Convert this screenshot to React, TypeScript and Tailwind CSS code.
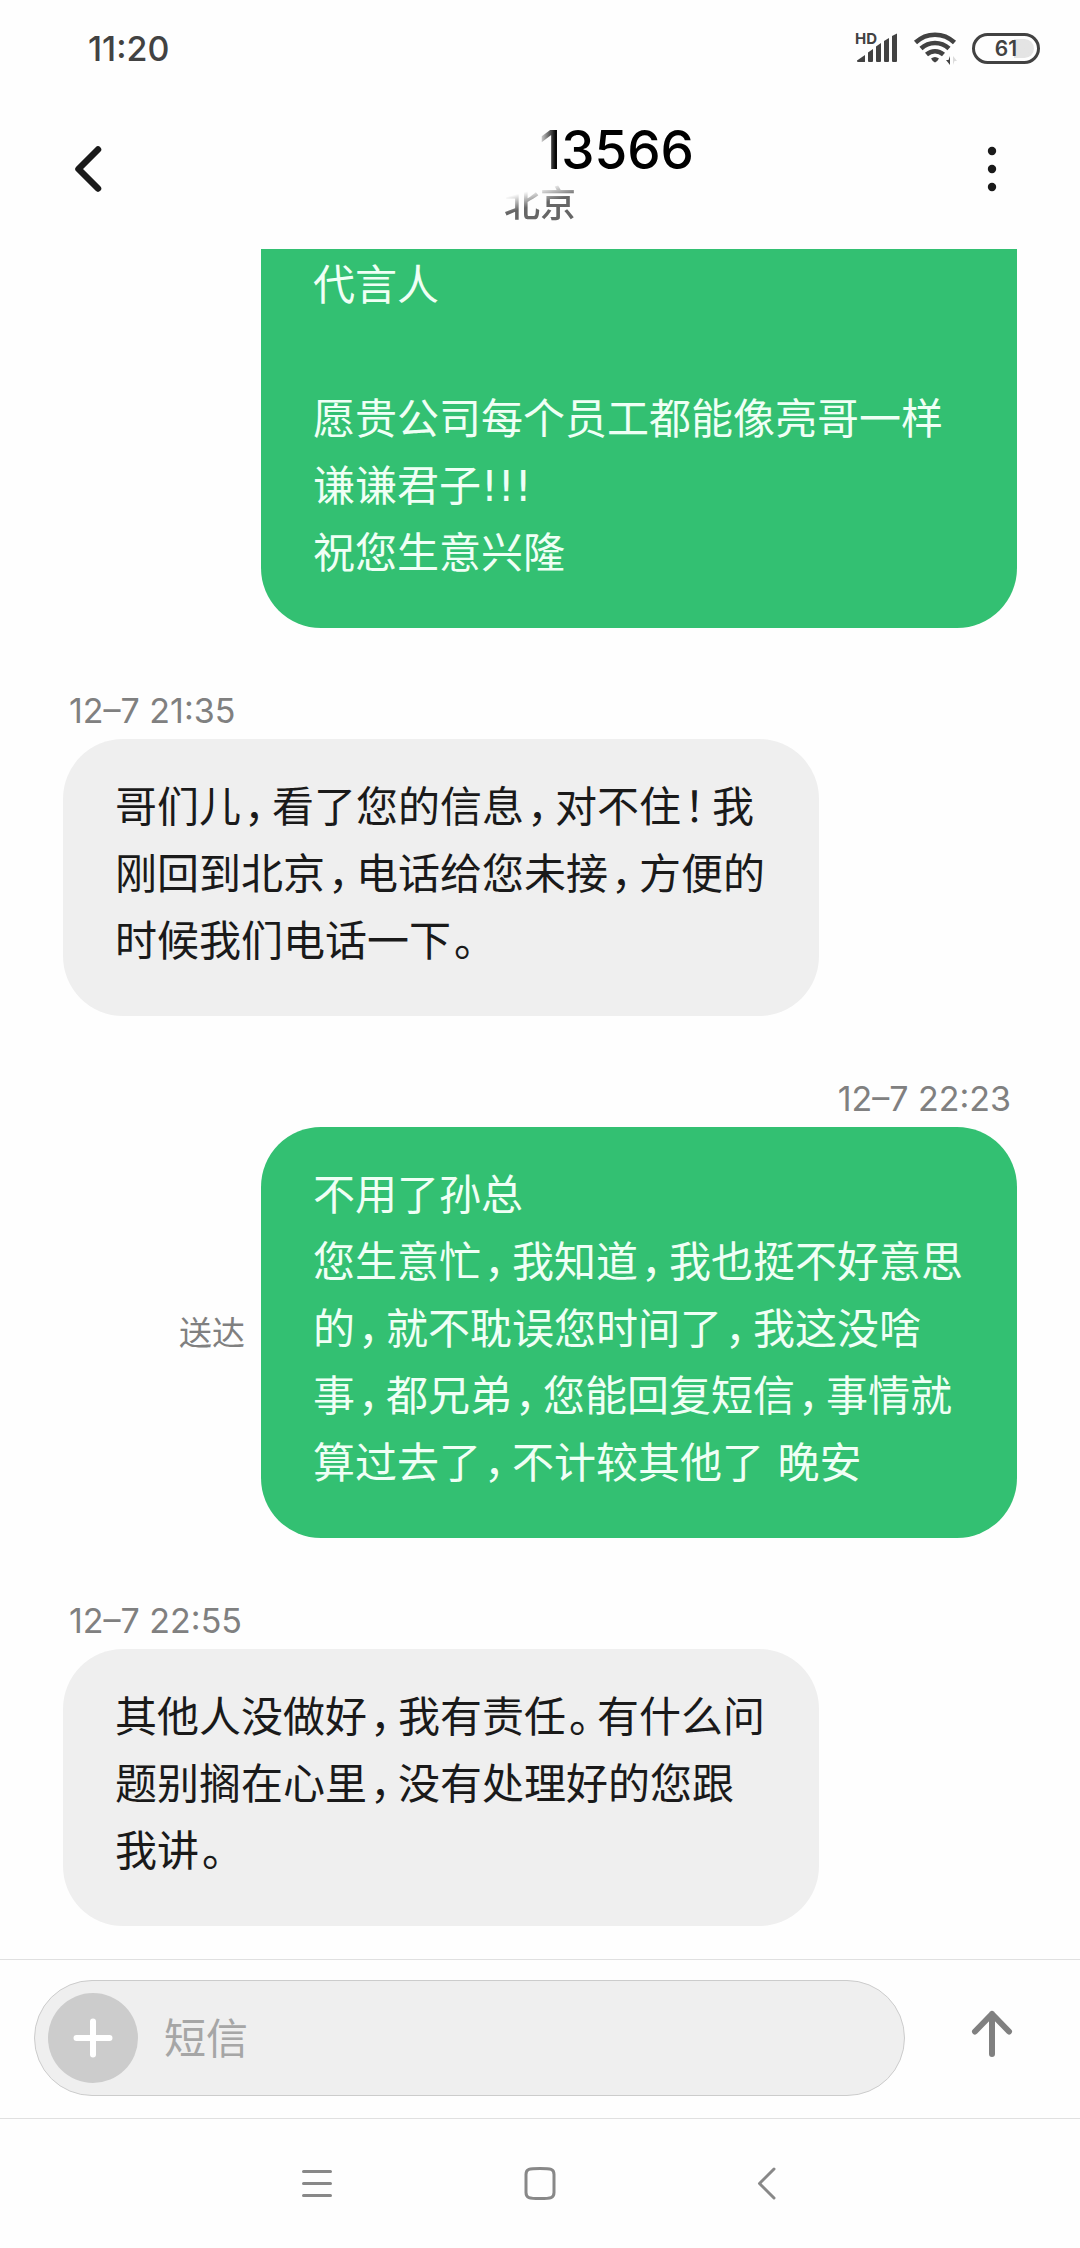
import React, { useState } from "react";

type Message = {
  id: number;
  mine: boolean;
  time?: string;
  status?: string;
  clipped?: boolean;
  lines: string[];
};

const messages: Message[] = [
  {
    id: 1,
    mine: true,
    clipped: true,
    lines: ["代言人", "", "愿贵公司每个员工都能像亮哥一样谦谦君子!!!", "祝您生意兴隆"],
  },
  {
    id: 2,
    mine: false,
    time: "12–7 21:35",
    lines: ["哥们儿，看了您的信息，对不住！我刚回到北京，电话给您未接，方便的时候我们电话一下。"],
  },
  {
    id: 3,
    mine: true,
    time: "12–7 22:23",
    status: "送达",
    lines: [
      "不用了孙总",
      "您生意忙，我知道，我也挺不好意思的，就不耽误您时间了，我这没啥事，都兄弟，您能回复短信，事情就算过去了，不计较其他了 晚安",
    ],
  },
  {
    id: 4,
    mine: false,
    time: "12–7 22:55",
    lines: ["其他人没做好，我有责任。有什么问题别搁在心里，没有处理好的您跟我讲。"],
  },
];

// Full-width punctuation uses the font's half-width forms with a little air on both sides
function MessageLine({ text }: { text: string }) {
  return (
    <p className="min-h-[67px]">
      {text.split(/([，。！])/).map((part, index) =>
        /^[，。！]$/.test(part) ? (
          <span key={index} className="mr-[7px] ml-[3px] [font-feature-settings:'halt']">
            {part}
          </span>
        ) : (
          part
        )
      )}
    </p>
  );
}

function MessageItem({ message }: { message: Message }) {
  const { mine, time, status, clipped, lines } = message;

  return (
    <li className={mine ? "flex flex-col items-end" : "flex flex-col items-start"}>
      {time && (
        <time className="mt-[59px] mb-1 px-[6px] text-[34px] leading-[48px] text-[#808080]">
          {time}
        </time>
      )}
      <div className={mine ? "flex w-full items-center justify-end gap-4" : "flex w-full items-center"}>
        {status && <span className="text-[33px] leading-[48px] text-[#808080]">{status}</span>}
        <div
          className={`w-[756px] max-w-[80%] px-[52px] pb-[41px] font-['DejaVu_Sans','Noto_Sans_CJK_SC',sans-serif] text-[42px] leading-[67px] ${
            mine ? "bg-[#33c072] text-[#effff5]" : "bg-[#efefef] text-[#1a1a1a]"
          } ${clipped ? "rounded-b-[60px] pt-[3px]" : "rounded-[60px] pt-[35px]"}`}
        >
          {lines.map((line, index) => (
            <MessageLine key={index} text={line} />
          ))}
        </div>
      </div>
    </li>
  );
}

function SignalIcon() {
  return (
    <svg width="42" height="32" viewBox="0 0 42 32" fill="#424242" aria-hidden="true">
      <path d="M1 28.5 9 23v6.500q0 .5-.5.500H2q-1.500-.5-1-1.500z" />
      <path d="M12 20.500 17 17v12q0 1-1 1h-3q-1 0-1-1z" />
      <path d="M20 14.500 25 11v18q0 1-1 1h-3q-1 0-1-1z" />
      <path d="M28 9 33 6v23q0 1-1 1h-3q-1 0-1-1z" />
      <path d="M36 4 41 1.500V29q0 1-1 1h-3q-1 0-1-1z" />
    </svg>
  );
}

function WifiIcon() {
  return (
    <svg width="44" height="36" viewBox="0 0 44 36" fill="none" aria-hidden="true">
      <g stroke="#424242" strokeWidth="4.500">
        <path d="M2.500 12.500C13.500 2 30.500 2 41.500 12.500" />
        <path d="M8 18.500C16 11 28 11 36 18.500" />
        <path d="M13.500 24.500C18.500 20 25.500 20 30.500 24.500" />
      </g>
      <path d="M18 28.500q4-3 8 0-1.500 3-4 4-2.500-1-4-4z" fill="#424242" />
      <path d="M37 26v9l-4-5h2.500z" fill="#424242" />
      <path d="M40 35v-9l4 5h-2.500z" fill="#dcdcdc" />
    </svg>
  );
}

function StatusBar() {
  return (
    <div className="flex h-24 items-center justify-between pr-10 pl-[88px] text-[#424242]">
      <time className="text-[34px] font-medium">11:20</time>
      <div className="flex items-center gap-[15px]">
        <div className="relative">
          <SignalIcon />
          <span className="absolute -top-px -left-px text-[15px] leading-none font-bold">HD</span>
        </div>
        <WifiIcon />
        <div className="flex h-[31px] w-[68px] rounded-full border-[3px] border-[#424242] p-[3px]">
          <span className="flex w-full items-center justify-center rounded-full bg-linear-to-r from-transparent from-65% to-[#e4e4e4] to-65% text-[21px] leading-none font-semibold">
            61
          </span>
        </div>
      </div>
    </div>
  );
}

function Header() {
  return (
    <header className="flex h-[153px] items-start justify-between px-[63px] pt-6">
      <button type="button" aria-label="返回" className="mt-[21px] w-[50px]">
        <svg width="50" height="56" viewBox="0 0 50 56" fill="none" stroke="#1a1a1a" strokeWidth="6.500" strokeLinecap="round" strokeLinejoin="round">
          <path d="M35 8.500 15.500 28 35 47.500" />
        </svg>
      </button>
      <div className="w-[308px] text-center">
        {/* the start of the number fades out */}
        <h1 className="mask-[linear-gradient(90deg,transparent_152px,black_170px)] text-right text-[53px] leading-[60px] font-medium text-black">
          13566
        </h1>
        <p className="inline-block mask-[linear-gradient(165deg,transparent_26%,black_50%)] text-[36px] leading-[48px] font-medium text-[#666666]">
          北京
        </p>
      </div>
      <button type="button" aria-label="更多" className="mt-[21px] flex w-[50px] justify-end">
        <svg width="50" height="56" viewBox="0 0 50 56" fill="#1a1a1a">
          <circle cx="25" cy="10" r="4.200" />
          <circle cx="25" cy="28" r="4.200" />
          <circle cx="25" cy="46" r="4.200" />
        </svg>
      </button>
    </header>
  );
}

function Composer() {
  const [text, setText] = useState("");

  return (
    <form
      onSubmit={(e) => e.preventDefault()}
      className="flex h-40 items-center border-y border-[#e0e0e0] pr-[63px] pl-[34px]"
    >
      <div className="mb-0.5 flex h-[116px] flex-1 items-center gap-[26px] rounded-full border border-[#cccccc] bg-[#efefef] pr-10 pl-[13px]">
        <button
          type="button"
          aria-label="添加"
          className="flex size-[90px] shrink-0 items-center justify-center rounded-full bg-[#cccccc]"
        >
          <svg width="40" height="40" viewBox="0 0 40 40" stroke="#ffffff" strokeWidth="6" strokeLinecap="round">
            <path d="M20 3.500v33M3.500 20h33" />
          </svg>
        </button>
        <input
          type="text"
          aria-label="短信"
          placeholder="短信"
          value={text}
          onChange={(e) => setText(e.target.value)}
          className="h-[67px] min-w-0 flex-1 bg-transparent text-[42px] text-[#1a1a1a] outline-none placeholder:text-[#a6a6a6]"
        />
      </div>
      <button type="submit" aria-label="发送" className="mb-[10px] ml-[62px] flex w-[50px] justify-center">
        <svg width="42" height="50" viewBox="0 0 42 50" fill="none" stroke="#808080" strokeWidth="6" strokeLinecap="round" strokeLinejoin="round">
          <path d="M21 45V5M4 22.500 21 5l17 17.500" />
        </svg>
      </button>
    </form>
  );
}

function NavBar() {
  return (
    <nav className="flex h-[129px] items-center justify-center gap-48 text-[#888888]">
      <button type="button" aria-label="菜单">
        <svg width="32" height="34" viewBox="0 0 32 34" stroke="currentColor" strokeWidth="3" strokeLinecap="round">
          <path d="M3.500 4.500h27M3.500 16.500h27M3.500 28.500h27" />
        </svg>
      </button>
      <button type="button" aria-label="主屏幕">
        <svg width="32" height="34" viewBox="0 0 32 34" fill="none" stroke="currentColor" strokeWidth="3">
          <path d="M16 1.500c11 0 14 .5 14 6v18c0 5.500-3 6-14 6S2 31 2 25.500V7.500c0-5.500 3-6 14-6z" />
        </svg>
      </button>
      <button type="button" aria-label="后退">
        <svg width="32" height="34" viewBox="0 0 32 34" fill="none" stroke="currentColor" strokeWidth="3" strokeLinecap="round" strokeLinejoin="round">
          <path d="M26 2 11.500 16.500 26 31" />
        </svg>
      </button>
    </nav>
  );
}

export default function App() {
  return (
    <div className="flex min-h-screen flex-col bg-[#fefefe] font-['Inter','Noto_Sans_CJK_SC',sans-serif]">
      <StatusBar />
      <Header />
      <main className="flex-1 px-[63px] pb-[33px]">
        <ul>
          {messages.map((message) => (
            <MessageItem key={message.id} message={message} />
          ))}
        </ul>
      </main>
      <Composer />
      <NavBar />
    </div>
  );
}
